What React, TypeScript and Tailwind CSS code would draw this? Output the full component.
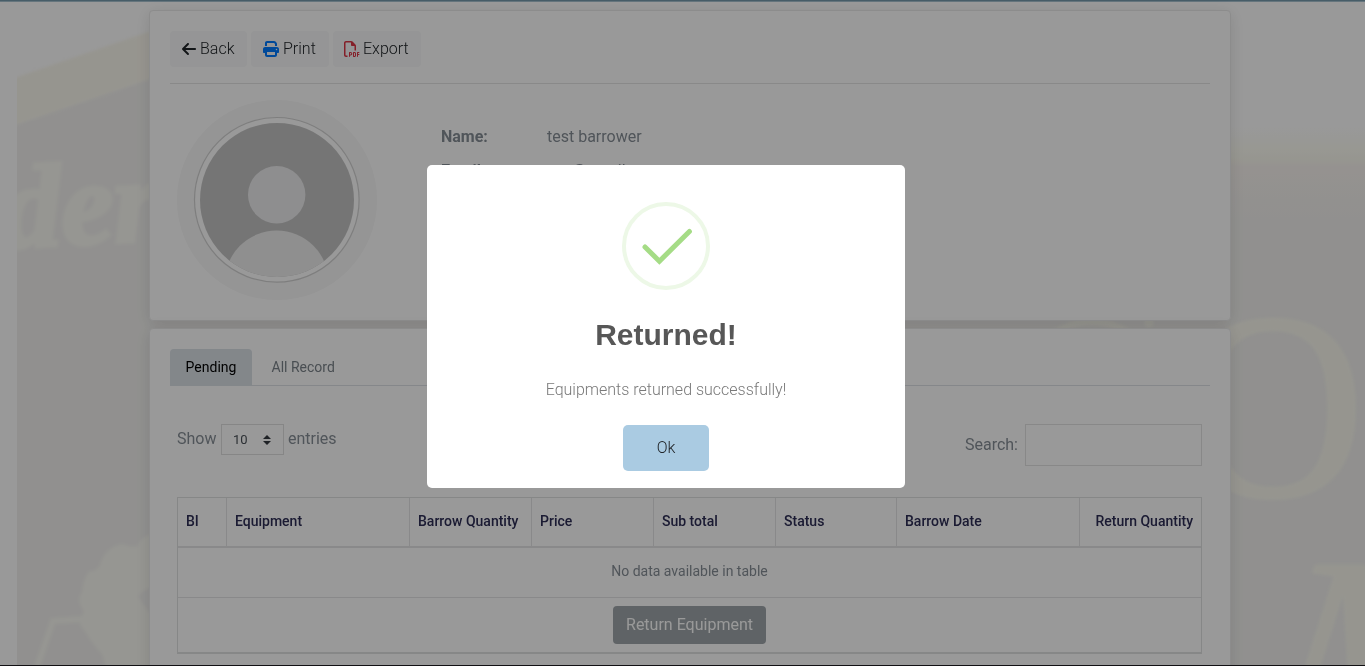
import React from "react";
import { FaArrowLeft, FaPrint, FaRegFilePdf } from "react-icons/fa6";

const columns = ["BI", "Equipment", "Barrow Quantity", "Price", "Sub total", "Status", "Barrow Date", "Return Quantity"];

function Backdrop() {
  return (
    <svg className="absolute inset-0" width="1365" height="666" viewBox="0 0 1365 666" aria-hidden="true">
      <defs>
        <linearGradient id="sky" x1="0" y1="0" x2="0" y2="1">
          <stop offset="0" stopColor="#ffffff" />
          <stop offset="0.19" stopColor="#ffffff" />
          <stop offset="0.225" stopColor="#fdfdf4" />
          <stop offset="0.24" stopColor="#fbfaf0" />
          <stop offset="0.25" stopColor="#f9f4f0" />
          <stop offset="0.3" stopColor="#f4f2ef" />
          <stop offset="0.33" stopColor="#f2f1ee" />
          <stop offset="1" stopColor="#f2f1ef" />
        </linearGradient>
        <filter id="soft" x="-10%" y="-10%" width="120%" height="120%" colorInterpolationFilters="sRGB">
          <feGaussianBlur stdDeviation="1.8" />
        </filter>
        <clipPath id="photo">
          <rect x="17" y="0" width="1348" height="666" />
        </clipPath>
      </defs>
      <rect x="600" width="765" height="666" fill="url(#sky)" />
      <g clipPath="url(#photo)">
        <g filter="url(#soft)">
          <path d="M0 130 L200 62 L620 62 L620 700 L0 700Z" fill="#f2f1ef" />
          <path d="M0 83 L200 14 L200 62 L0 130Z" fill="#fbf9ef" />
          <text x="4" y="248" fontSize="118" fontWeight="bold" fontStyle="italic" fontFamily="Liberation Serif, serif" fill="#fafaf3" stroke="#fafaf3" strokeWidth="4" transform="rotate(-3 4 248)">der</text>
          <path d="M100 565 Q104 548 122 544 Q132 548 138 546 Q140 535 160 533 L160 680 L106 680 Q106 655 98 650 Q90 640 84 630 Q76 622 84 612 Q76 600 82 592 Q84 575 90 571 Q96 572 100 565Z" fill="#fafaf3" />
          <path d="M138 596 Q144 588 160 584 L160 622 Q145 610 138 596Z" fill="#f2f1ef" />
          <path d="M36 670 L53 621 L84 619" fill="none" stroke="#fafaf3" strokeWidth="6" />
          <text x="1181" y="496" fontSize="267" fontFamily="Liberation Serif, serif" fill="#faf9ef" stroke="#faf9ef" strokeWidth="3" textLength="184" lengthAdjust="spacingAndGlyphs">O</text>
          <ellipse cx="1092" cy="409" rx="78" ry="87" fill="none" stroke="#faf9ef" strokeWidth="7" />
          <circle cx="1149" cy="323" r="5" fill="#faf9ef" />
          <text x="0" y="0" fontSize="268" fontStyle="italic" fontFamily="Liberation Serif, serif" fill="#faf9ef" stroke="#faf9ef" strokeWidth="2" transform="translate(1263 741) skewX(-8)">M</text>
        </g>
      </g>
    </svg>
  );
}

function ToolButton({ children, width }: { children: React.ReactNode; width: string }) {
  return (
    <button className={`flex h-9 items-center justify-start gap-[3px] rounded bg-[#f8f9fa] text-base font-light text-[#212529] ${width}`}>
      {children}
    </button>
  );
}

function Avatar() {
  return (
    <svg width="200" height="200" viewBox="0 0 200 200" className="ml-[7px]">
      <defs>
        <clipPath id="face">
          <circle cx="100" cy="100" r="77" />
        </clipPath>
      </defs>
      <circle cx="100" cy="100" r="100" fill="#f8f8f8" />
      <circle cx="99.8" cy="99.8" r="82.3" fill="#ffffff" stroke="#d3d3d3" strokeWidth="1.2" />
      <g clipPath="url(#face)">
        <rect width="200" height="200" fill="#c4c4c4" />
        <circle cx="99.7" cy="94.7" r="28.7" fill="#ededef" />
        <circle cx="99.7" cy="182.6" r="52" fill="#efefef" />
      </g>
    </svg>
  );
}

function ProfileCard() {
  return (
    <section className="h-[311px] rounded border border-[#e9e9e9] bg-white px-5 pt-5 shadow-[0_3px_16px_rgba(0,0,0,0.12)]">
      <div className="flex gap-1">
        <ToolButton width="w-[77px] pl-[11px]"><FaArrowLeft size={16} />Back</ToolButton>
        <ToolButton width="w-[78px] pl-3"><FaPrint size={16} className="mr-px text-[#007bff]" />Print</ToolButton>
        <ToolButton width="w-[88px] pl-[11px]"><FaRegFilePdf size={16} className="text-[#dc3545]" />Export</ToolButton>
      </div>
      <hr className="mt-4 mb-4 border-[#e4e4e5]" />
      <div className="flex">
        <Avatar />
        <dl className="ml-16 grid auto-rows-[34px] grid-cols-[106px_auto] pt-[25px] leading-6">
          <dt className="font-bold">Name:</dt>
          <dd>test barrower</dd>
          <dt className="font-bold">Email:</dt>
          <dd>eva@gmail.com</dd>
        </dl>
      </div>
    </section>
  );
}

function RecordsCard() {
  return (
    <section className="mt-[7px] h-[400px] rounded border border-[#e9e9e9] bg-white px-5 pt-5 shadow-[0_3px_16px_rgba(0,0,0,0.12)]">
      <nav className="flex h-[37px] border-b border-[#dee2e6] text-sm">
        <span className="flex h-[37px] w-[82px] items-center justify-center rounded-t bg-[#dae1e7] pb-0.5 text-black">Pending</span>
        <span className="flex h-[37px] items-center pb-0.5 pl-[19.5px] text-[#7b838a]">All Record</span>
      </nav>
      <div className="pr-2 pl-[7px]">
        <div className="mt-[38px] flex h-[42px] items-start justify-between">
          <div className="flex items-center gap-1">
            <span className="w-10 pb-0.5">Show</span>
            <span className="flex h-[31px] w-[63px] items-center justify-between border border-[#e0e0e0] pr-3 pl-[11px] text-[13px] text-[#495057]">
              10
              <svg width="8" height="10" viewBox="0 0 8 10"><path d="M0 4 L4 0 L8 4Z M0 6 L4 10 L8 6Z" fill="#343a40" /></svg>
            </span>
            <span className="pb-0.5">entries</span>
          </div>
          <label className="flex items-center gap-[7px]">
            Search:
            <input className="h-[42px] w-[177px] border border-[#e3e3e3]" />
          </label>
        </div>
        <div className="mt-[31px] w-[1025px] border border-b-2 border-[#e0e1e2] text-sm">
          <div className="grid h-[50px] grid-cols-[49px_183px_122px_122px_122px_121px_183px_auto] border-b-2 border-[#e4e5e6] font-medium text-[#2d2d55]">
            {columns.map((name, index) => (
              <div
                key={name}
                className={
                  index === columns.length - 1
                    ? "flex items-center justify-end pr-2 pb-[3px]"
                    : "flex items-center border-r border-[#e4e5e6] pb-[3px] pl-2"
                }
              >
                {name}
              </div>
            ))}
          </div>
          <div className="flex h-[50px] items-center justify-center border-b border-[#e4e5e6] pb-[3px]">No data available in table</div>
          <div className="flex h-[54px] items-center justify-center">
            <button className="h-[38px] w-[153px] rounded bg-[#9fa6aa] text-base text-white">Return Equipment</button>
          </div>
        </div>
      </div>
    </section>
  );
}

function SuccessDialog() {
  return (
    <div className="absolute inset-0 flex items-start justify-center bg-black/40 pt-[165px] pr-[33px]">
      <div role="dialog" className="flex h-[323px] w-[478px] flex-col items-center rounded-[5px] bg-white pt-[37px]">
        <svg width="88" height="88" viewBox="0 0 88 88">
          <circle cx="44" cy="44" r="42" fill="none" stroke="#edf8e7" strokeWidth="4" />
          <path d="M23 45 L37.4 59.2 L67.4 29.5" fill="none" stroke="#a5dc86" strokeWidth="5" strokeLinecap="round" />
        </svg>
        <h2 className="mt-[27px] font-['Liberation_Sans',Arial,sans-serif] text-[30px] leading-9 font-bold text-[#575757]">Returned!</h2>
        <p className="mt-[25px] text-base leading-6 font-light text-[#797979]">Equipments returned successfully!</p>
        <button className="mt-[23px] h-[46px] w-[86px] rounded-[5px] bg-[#aacbe2] text-base font-light text-[#212529]">Ok</button>
      </div>
    </div>
  );
}

export default function App() {
  return (
    <div className="relative h-[666px] w-[1365px] overflow-hidden bg-white font-[Roboto,sans-serif] text-base text-[#868e96]">
      <Backdrop />
      <div className="relative h-full">
        <div className="h-0.5 border-b border-[#a9c3d1] bg-[#779bad]" />
        <main className="ml-[149px] w-[1082px] pt-2">
          <ProfileCard />
          <RecordsCard />
        </main>
      </div>
      <SuccessDialog />
      <div className="absolute inset-x-0 bottom-0 h-px bg-[#111013]" />
    </div>
  );
}
